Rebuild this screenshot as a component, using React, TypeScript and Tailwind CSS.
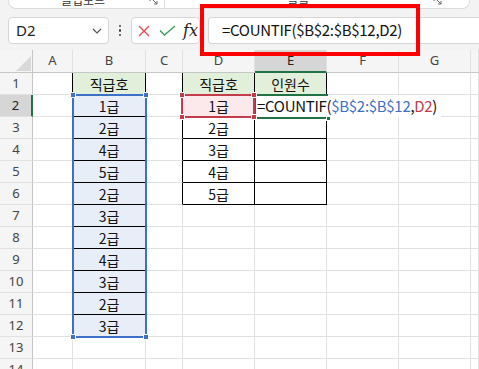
import React from "react";

const colLetters = ["A", "B", "C", "D", "E", "F", "G", ""];
const bVals = ["직급호", "1급", "2급", "4급", "5급", "2급", "3급", "2급", "4급", "3급", "2급", "3급"];
const dVals = ["직급호", "1급", "2급", "3급", "4급", "5급"];
const eVals = ["인원수", "", "", "", "", ""];
const rows = Array.from({ length: 14 }, (_, i) => i + 1);

// c: 0=A ... 7=H
const cellText = (r: number, c: number) => {
  if (c === 1 && r <= 12) return bVals[r - 1];
  if (c === 3 && r <= 6) return dVals[r - 1];
  if (c === 4 && r <= 6) return eVals[r - 1];
  return "";
};

const cellClass = (r: number, c: number) => {
  const rightBlack = ((c === 0 || c === 1) && r <= 12) || ((c === 2 || c === 3 || c === 4) && r <= 6);
  const bottomBlack = (c === 1 && r <= 12) || ((c === 3 || c === 4) && r <= 6);
  let bg = "bg-white";
  if (r === 1 && (c === 1 || c === 3 || c === 4)) bg = "bg-[#e2efda]";
  else if (c === 1 && r >= 2 && r <= 12) bg = "bg-[#e8eef8]";
  else if (c === 3 && r === 2) bg = "bg-[#fbe9eb]";
  return [
    "flex items-center justify-center border-r border-b text-[14px] text-[#111] leading-none",
    rightBlack ? "border-r-black" : "border-r-[#e1e1e1]",
    bottomBlack ? "border-b-black" : "border-b-[#e1e1e1]",
    bg,
  ].join(" ");
};

const Launcher = () => (
  <svg width="9" height="9" viewBox="0 0 9 9" className="mb-[3px]">
    <path d="M1 1h4M1 1v4M3 3l5 5M8 5v3H5" stroke="#666" strokeWidth="1" fill="none" />
  </svg>
);

export default function App() {
  return (
    <div className="relative w-[479px] h-[369px] overflow-hidden bg-[#f3f3f3] font-['Noto_Sans','Noto_Sans_CJK_KR',sans-serif]">
      {/* ribbon remnant */}
      <div className="h-[9px] pl-[8px] pr-[9px]">
        <div className="flex h-full items-end overflow-hidden rounded-b-[8px] border-x border-b border-[#dcdcdc] bg-white font-['Noto_Sans_CJK_KR',sans-serif] text-[12px] text-[#333]">
          <span className="ml-[52px] mb-[2px] leading-[12px]">클립보드</span>
          <div className="ml-[44px]"><Launcher /></div>
          <div className="ml-[6px] h-full w-px bg-[#e0e0e0]" />
          <span className="ml-[122px] mb-[2px] leading-[12px]">글꼴</span>
          <div className="ml-[124px]"><Launcher /></div>
        </div>
      </div>

      {/* formula bar */}
      <div className="flex items-start pt-[8px] pb-[6px]">
        <div className="ml-[8px] flex h-[27px] w-[101px] items-center justify-between rounded-[4px] border border-[#d6d6d6] bg-white pl-[7px] pr-[6px]">
          <span className="text-[15px] text-[#222]">D2</span>
          <svg width="10" height="6" viewBox="0 0 10 6">
            <path d="M1 1l4 4 4-4" stroke="#555" strokeWidth="1.2" fill="none" />
          </svg>
        </div>
        <div className="flex h-[27px] w-[22px] flex-col items-center justify-center gap-[2px]">
          <span className="h-[2.5px] w-[2.5px] rounded-full bg-[#444]" />
          <span className="h-[2.5px] w-[2.5px] rounded-full bg-[#444]" />
          <span className="h-[2.5px] w-[2.5px] rounded-full bg-[#444]" />
        </div>
        <div className="flex h-[27px] w-[69px] items-center rounded-[4px] border border-[#d6d6d6] bg-white pl-[6px]">
          <svg width="12" height="12" viewBox="0 0 12 12">
            <path d="M1 1l10 10M11 1L1 11" stroke="#e5484d" strokeWidth="1.3" fill="none" />
          </svg>
          <svg width="17" height="11" viewBox="0 0 17 11" className="ml-[9px]">
            <path d="M1 5.5l4.5 4.5L16 1" stroke="#3a9a5b" strokeWidth="1.3" fill="none" />
          </svg>
          <span className="ml-[7px] font-['DejaVu_Serif',serif] text-[16px] italic leading-none text-[#222]">fx</span>
        </div>
        <div className="ml-[8px] flex h-[27px] flex-1 items-center rounded-l-[4px] border-y border-l border-[#d6d6d6] bg-white pl-[13px] font-['Noto_Sans_CJK_KR',sans-serif] text-[15px] tracking-[-0.3px] text-[#111]">
          =COUNTIF($B$2:$B$12,D2)
        </div>
      </div>

      {/* sheet */}
      <div className="relative grid grid-cols-[33px_40px_73px_37px_72px_72px_72px_72px_8px] grid-rows-[23px_repeat(14,22px)] bg-white">
        <div className="flex items-end justify-end border-r border-b border-r-[#c6c6c6] border-b-[#c6c6c6] bg-[#f5f5f5] pr-[1px] pb-[1px]">
          <svg width="15" height="15" viewBox="0 0 15 15">
            <path d="M15 0V15H0Z" fill="#d9d9d9" />
          </svg>
        </div>
        {colLetters.map((l, i) => (
          <div
            key={l + i}
            className={
              i === 4
                ? "flex items-center justify-center border-r border-b-2 border-r-[#e1e1e1] border-b-[#217346] bg-[#d6d6d6] text-[13px] text-[#222]"
                : "flex items-center justify-center border-r border-b border-r-[#e1e1e1] border-b-[#c6c6c6] bg-[#f5f5f5] text-[13px] text-[#444]"
            }
          >
            {l}
          </div>
        ))}
        {rows.map((r) => (
          <React.Fragment key={r}>
            <div
              className={
                r === 2
                  ? "flex items-center justify-center border-r-2 border-b border-r-[#217346] border-b-[#e1e1e1] bg-[#d6d6d6] text-[13px] text-[#222]"
                  : "flex items-center justify-center border-r border-b border-r-[#c6c6c6] border-b-[#e1e1e1] bg-[#f5f5f5] text-[13px] text-[#444]"
              }
            >
              {r}
            </div>
            {colLetters.map((_, c) => (
              <div key={c} className={cellClass(r, c) + " font-['Noto_Sans_CJK_KR',sans-serif]"}>
                {cellText(r, c)}
              </div>
            ))}
          </React.Fragment>
        ))}

        {/* referenced range B2:B12 */}
        <div className="absolute left-[72px] top-[44px] h-[244px] w-[75px] border-2 border-[#3d70c7]">
          <span className="absolute -left-[4px] -top-[4px] h-[6px] w-[6px] border border-white bg-[#3d70c7]" />
          <span className="absolute -right-[4px] -top-[4px] h-[6px] w-[6px] border border-white bg-[#3d70c7]" />
          <span className="absolute -left-[4px] -bottom-[4px] h-[6px] w-[6px] border border-white bg-[#3d70c7]" />
          <span className="absolute -right-[4px] -bottom-[4px] h-[6px] w-[6px] border border-white bg-[#3d70c7]" />
        </div>

        {/* cell editor E2 */}
        <div className="absolute left-[256px] top-[45px] flex h-[22px] items-center bg-white pl-[1px] pr-[4px] font-['Noto_Sans_CJK_KR',sans-serif] text-[15px] tracking-[-0.3px] whitespace-nowrap text-[#111]">
          =COUNTIF(<span className="text-[#3d70c7]">$B$2:$B$12</span>,<span className="text-[#c43b4a]">D2</span>)
        </div>
        <div className="absolute left-[254px] top-[44px] h-[25px] w-[74px] border-y-2 border-l-2 border-[#217346]">
          <span className="absolute -right-[3px] -bottom-[4px] h-[5px] w-[5px] border border-white bg-[#217346]" />
        </div>

        {/* referenced cell D2 */}
        <div className="absolute left-[181px] top-[44px] h-[24px] w-[74px] border-2 border-[#c43b4a]">
          <span className="absolute -left-[4px] -top-[4px] h-[6px] w-[6px] border border-white bg-[#c43b4a]" />
          <span className="absolute -right-[4px] -top-[4px] h-[6px] w-[6px] border border-white bg-[#c43b4a]" />
          <span className="absolute -left-[4px] -bottom-[4px] h-[6px] w-[6px] border border-white bg-[#c43b4a]" />
          <span className="absolute -right-[4px] -bottom-[4px] h-[6px] w-[6px] border border-white bg-[#c43b4a]" />
        </div>
      </div>

      {/* red callout around formula */}
      <div className="pointer-events-none absolute left-[200px] top-[4px] h-[52px] w-[220px] border-4 border-[#ff0000]" />
    </div>
  );
}
